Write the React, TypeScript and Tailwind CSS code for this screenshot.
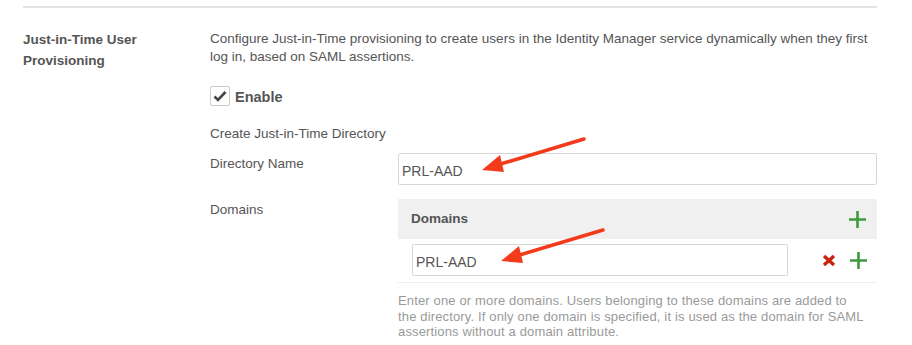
import { useState } from "react";

const Arrow = ({ className }: { className: string }) => (
    <svg
        className={`absolute pointer-events-none ${className}`}
        width="110"
        height="40"
        viewBox="0 0 110 40"
    >
        <line x1="104" y1="3" x2="14" y2="30" stroke="#f33a1b" strokeWidth="3.5" strokeLinecap="round" />
        <polygon points="2,34 20,19 24,36" fill="#f33a1b" />
    </svg>
);

const Plus = () => (
    <svg width="19" height="19" viewBox="0 0 19 19">
        <path d="M9.5 1v17M1 9.5h17" stroke="#3d9a3d" strokeWidth="2.6" />
    </svg>
);

const App = () => {
    const [enabled, setEnabled] = useState(true);
    return (
        <div
            className="w-[912px] h-[345px] bg-white relative overflow-hidden"
            style={{ fontFamily: '"Liberation Sans", Arial, sans-serif' }}
        >
            <div className="ml-[23px] w-[854px] pt-[6px]">
                <div className="border-t-2 border-[#e4e4e4]" />
                <div className="flex pt-[22px]">
                    <div className="w-[187px] text-[13.5px] font-bold text-[#555] leading-[21px] -mt-[1px]">
                        Just-in-Time User
                        <br />
                        Provisioning
                    </div>
                    <div className="flex-1 text-[#555]">
                        <p className="text-[13.5px] leading-[18px]">
                            Configure Just-in-Time provisioning to create users in the Identity Manager service dynamically when they first
                            <br />
                            log in, based on SAML assertions.
                        </p>
                        <label className="flex items-center gap-[5px] mt-[20px] h-[20px] cursor-pointer">
                            <span
                                onClick={() => setEnabled(!enabled)}
                                className="w-[20px] h-[20px] border border-[#ccc] rounded-[2px] flex items-center justify-center bg-white"
                            >
                                {enabled && (
                                    <svg width="14" height="12" viewBox="0 0 14 12">
                                        <path d="M1.5 6.5l3.5 3.5 7.5-8" fill="none" stroke="#444" strokeWidth="2.6" />
                                    </svg>
                                )}
                            </span>
                            <span className="text-[14.5px] font-bold text-[#555] pt-[3px]">Enable</span>
                        </label>
                        <div className="text-[13.5px] mt-[19px] leading-[18px]">
                            Create Just-in-Time Directory
                        </div>
                        <div className="flex mt-[11px]">
                            <div className="w-[188px] text-[13.5px] leading-[18px] pt-[1px]">
                                Directory Name
                            </div>
                            <input
                                defaultValue="PRL-AAD"
                                className="w-[479px] h-[32px] -mt-[1px] border border-[#d6d6d6] rounded-[2px] px-[3px] text-[14px] text-[#555] pt-[3px] outline-none"
                            />
                        </div>
                        <div className="flex mt-[14px]">
                            <div className="w-[188px] text-[13.5px] leading-[18px] pt-[2px]">
                                Domains
                            </div>
                            <div className="w-[479px]">
                                <div className="h-[40px] bg-[#f0f0f0] flex items-center justify-between pl-[13px] pr-[10px]">
                                    <span className="text-[13.5px] font-bold text-[#555] pt-[1px]">Domains</span>
                                    <Plus />
                                </div>
                                <div className="flex items-center pt-[5px] pb-[6px] border-b border-[#eee]">
                                    <input
                                        defaultValue="PRL-AAD"
                                        className="ml-[14px] w-[376px] h-[32px] border border-[#d6d6d6] rounded-[2px] px-[3px] text-[14px] text-[#555] pt-[3px] outline-none"
                                    />
                                    <svg className="ml-[34px]" width="14" height="13" viewBox="0 0 14 13">
                                        <path d="M2 2l10 9M12 2L2 11" stroke="#c7240f" strokeWidth="3.4" />
                                    </svg>
                                    <span className="ml-[13px]">
                                        <Plus />
                                    </span>
                                </div>
                                <p className="text-[13px] tracking-[0.15px] leading-[15.5px] text-[#9a9a9a] mt-[10px]">
                                    Enter one or more domains. Users belonging to these domains are added to
                                    <br />
                                    the directory. If only one domain is specified, it is used as the domain for SAML
                                    <br />
                                    assertions without a domain attribute.
                                </p>
                            </div>
                        </div>
                    </div>
                </div>
            </div>
            <Arrow className="left-[480px] top-[136px]" />
            <Arrow className="left-[499px] top-[227px]" />
        </div>
    );
};

export default App;
